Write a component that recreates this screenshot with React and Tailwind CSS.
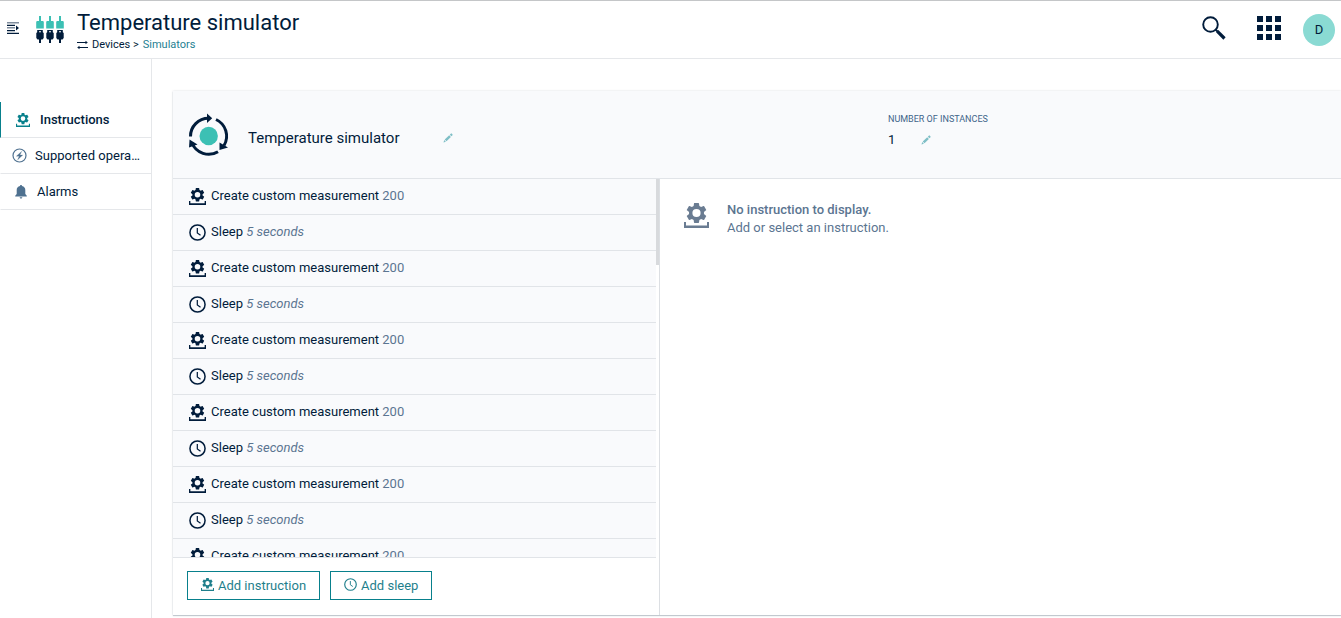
import React, { useState } from 'react';

const steps = Array.from({ length: 16 }, (_, i) =>
  i % 2 === 0
    ? { id: i, type: 'measurement', name: 'Create custom measurement', value: '200' }
    : { id: i, type: 'sleep', name: 'Sleep', value: '5 seconds' }
);

const GearTray = ({ className }) => (
  <svg viewBox="0 0 25 25" fill="currentColor" fillRule="evenodd" className={className} aria-hidden="true">
    <path
      transform="translate(.5 -2)"
      d="M19.43 12.98c.04-.32.07-.64.07-.98s-.03-.66-.07-.98l2.11-1.65c.19-.15.24-.42.12-.64l-2-3.46c-.12-.22-.39-.3-.61-.22l-2.49 1c-.52-.4-1.08-.73-1.69-.98l-.38-2.65A.488.488 0 0 0 14 2h-4c-.25 0-.46.18-.49.42l-.38 2.65c-.61.25-1.17.59-1.69.98l-2.49-1c-.23-.09-.49 0-.61.22l-2 3.46c-.13.22-.07.49.12.64l2.11 1.65c-.04.32-.07.65-.07.98s.03.66.07.98l-2.11 1.65c-.19.15-.24.42-.12.64l2 3.46c.12.22.39.3.61.22l2.49-1c.52.4 1.08.73 1.69.98l.38 2.65c.03.24.24.42.49.42h4c.25 0 .46-.18.49-.42l.38-2.65c.61-.25 1.17-.59 1.69-.98l2.49 1c.23.09.49 0 .61-.22l2-3.46c.12-.22.07-.49-.12-.64l-2.11-1.65zM12 7.9a4.1 4.1 0 1 0 0 8.2 4.1 4.1 0 0 0 0-8.2z"
    />
    <path d="M0 19h2v3.5h21V19h2v6H0z" />
  </svg>
);

const Clock = ({ className }) => (
  <svg viewBox="0 0 18 18" fill="none" stroke="currentColor" strokeWidth="1.6" className={className} aria-hidden="true">
    <circle cx="9" cy="9" r="8" />
    <path d="M8.8 4.2v5.2l3.4 2.4" strokeWidth="1.3" />
  </svg>
);

const Pencil = ({ className }) => (
  <svg viewBox="0 0 10 10" fill="currentColor" className={className} aria-hidden="true">
    <path d="M.5 9.5l.7-2.4 1.7 1.7zM1.7 6.5l4.5-4.3 1.7 1.7-4.4 4.4zM6.8 1.7L8 .6c.3-.2.5-.2.8 0l.7.8c.2.3.2.5 0 .8L8.4 3.3z" />
  </svg>
);

const MenuIcon = () => (
  <svg viewBox="0 0 13 13" fill="currentColor" className="size-[13px]" aria-hidden="true">
    <path opacity=".5" d="M0 0h12v1.5H0zM0 5h8v1.5H0z" />
    <path d="M0 2.7h8V4H0zM0 8h8v1.3H0zM0 10.7h12V12H0zM9 3.4l3 2.6-3 2.6z" />
  </svg>
);

// Three plugs, teal heads over dark sockets
const DevicesIcon = () => (
  <svg viewBox="0 0 28 28" className="size-7" aria-hidden="true">
    {[0, 10, 20].map((x) => (
      <g key={x} transform={`translate(${x} 0)`}>
        <path fill="#3cc0b4" d="M3 0h2v5h2.200l.6 1v6.500H.2V6l.6-1H3z" />
        <path fill="#011c3b" d="M1.200 14h5.600v2.300l.9.700v5l-1.200 1.500H5V27H3v-3.500H1.500L.3 22v-5l.9-.7z" />
        <path fill="#fff" d="M3 15.200h2v1H3z" />
      </g>
    ))}
  </svg>
);

const SwapIcon = () => (
  <svg viewBox="0 0 11 10" fill="currentColor" className="h-[10px] w-[11px]" aria-hidden="true">
    <path d="M0 2h8.500V.7L10.800 2.500 8.500 4.300V3H0zM11 7H2.500V5.700L.2 7.500l2.300 1.800V8H11z" />
  </svg>
);

const SimulatorIcon = () => (
  <svg viewBox="0 0 44 44" className="size-11" aria-hidden="true">
    <circle cx="20.700" cy="23" r="9.200" fill="#3cc0b4" />
    <g fill="none" stroke="#011c3b" strokeWidth="3">
      <path d="M2.500 23.500A18 18 0 0 1 20.500 5.300" />
      <path d="M28 6.500A18.300 18.300 0 0 1 36 32.500" />
      <path d="M30 38.700A18 18 0 0 1 4 30" />
    </g>
    <g fill="#011c3b">
      <path d="M19 .5v9.600l5.200-4.800z" />
      <path d="M31.500 29.500v7.500l8.500-2.500z" />
      <path d="M1 34.500L1.500 26.500l8 5z" />
    </g>
  </svg>
);

const OperationsIcon = () => (
  <svg viewBox="0 0 16 16" fill="none" stroke="currentColor" strokeWidth="1.200" className="size-4 text-[#4f7190]" aria-hidden="true">
    <circle cx="7.500" cy="7.500" r="6.500" />
    <path d="M9.800 3.200L4.300 8.200h2.900l-1.700 3.900 5.300-5H8z" fill="currentColor" strokeWidth=".2" />
  </svg>
);

const BellIcon = () => (
  <svg viewBox="0 0 12 14" fill="currentColor" className="h-[14px] w-3 text-[#4f7190]" aria-hidden="true">
    <path d="M6 0c.6 0 1 .4 1 1 2.200.5 3.300 2 3.300 4v4l1.500 1.700v.8H.2v-.8L1.700 9V5c0-2 1.100-3.500 3.300-4 0-.6.400-1 1-1zM4.700 12.200h2.600c0 .8-.6 1.300-1.300 1.300s-1.300-.5-1.300-1.300z" />
  </svg>
);

const SearchIcon = () => (
  <svg viewBox="0 0 24 24" fill="none" stroke="currentColor" className="size-6" aria-hidden="true">
    <circle cx="8.500" cy="8.500" r="7.300" strokeWidth="1.900" />
    <path d="M13.500 13.500l2 2" strokeWidth="2" />
    <path d="M15.200 15.200l7.300 7.300" strokeWidth="3.200" />
  </svg>
);

const AppsIcon = () => (
  <svg viewBox="0 0 24 24" fill="currentColor" className="size-6" aria-hidden="true">
    <path d="M0 0h6v6H0zM9 0h6v6H9zM18 0h6v6h-6zM0 9h6v6H0zM9 9h6v6H9zM18 9h6v6h-6zM0 18h6v6H0zM9 18h6v6H9zM18 18h6v6h-6z" />
  </svg>
);

function App() {
  const [active, setActive] = useState('Instructions');

  const navItem = (name) =>
    `flex h-9 w-full items-center border-b border-b-[#e5e7ea] border-l text-left ${
      active === name ? 'border-l-[#08808c] font-medium' : 'border-l-transparent'
    }`;

  return (
    <div className="flex h-screen flex-col overflow-hidden bg-white font-['Roboto',sans-serif] text-[13px] leading-[18px] text-[#011c3b]">
      {/* Top bar */}
      <header className="flex h-[59px] shrink-0 items-center border-t border-b border-t-[#c4c6c8] border-b-[#e5e7ea] pr-[6px] pl-[7px]">
        <button aria-label="Toggle navigation" className="pb-[2px]"><MenuIcon /></button>
        <div className="ml-4 flex flex-1 items-center gap-[13px]">
          <DevicesIcon />
          <div className="pt-[2px]">
            <h1 className="text-[22px] leading-7">Temperature simulator</h1>
            <div className="flex h-4 items-center gap-1 text-[11px] leading-4">
              <SwapIcon />
              <span>Devices &gt;</span>
              <a href="#simulators" className="text-[#1f7f92]">Simulators</a>
            </div>
          </div>
        </div>
        <div className="flex items-center">
          <button aria-label="Search" className="pb-1"><SearchIcon /></button>
          <button aria-label="Applications" className="ml-[31px] pb-[3px]"><AppsIcon /></button>
          <button aria-label="User menu" className="ml-[22px] size-8 rounded-full bg-[#8adad3] text-[13px]">D</button>
        </div>
      </header>

      <div className="flex min-h-0 flex-1">
        {/* Side navigation */}
        <nav className="w-[152px] shrink-0 border-r border-[#e5e7ea] pt-[43px]">
          <button onClick={() => setActive('Instructions')} className={`${navItem('Instructions')} gap-[10px] pl-[15px]`}>
            <GearTray className="size-[14px] text-[#08808c]" />
            Instructions
          </button>
          <button onClick={() => setActive('Supported operations')} className={`${navItem('Supported operations')} gap-[7px] pr-2 pl-[11px]`}>
            <OperationsIcon />
            <span className="min-w-0 flex-1 truncate">Supported operations</span>
          </button>
          <button onClick={() => setActive('Alarms')} className={`${navItem('Alarms')} gap-[10px] pl-[14px]`}>
            <BellIcon />
            Alarms
          </button>
        </nav>

        <main className="flex min-w-0 flex-1 flex-col pt-8 pb-[3px] pl-[21px]">
          <section className="flex min-h-0 flex-1 flex-col shadow-[0_0_2px_rgba(1,28,59,0.15),0_1px_1px_rgba(1,28,59,0.2)]">
            <div className="flex h-[88px] shrink-0 items-center border-b border-[#e1e4e8] bg-[#f9fafc] pl-[15px]">
              <div className="flex flex-1 items-center">
                <SimulatorIcon />
                <div className="flex items-center gap-11 pt-[6px] pl-4">
                  <h2 className="text-[15px] leading-5">Temperature simulator</h2>
                  <button aria-label="Edit name" className="text-[#7fbfc6]"><Pencil className="size-[10px]" /></button>
                </div>
              </div>
              <div className="w-[453px] pb-[10px]">
                <div className="text-[9px] leading-4 text-[#41658a]">NUMBER OF INSTANCES</div>
                <div className="mt-1 flex items-center gap-[26px]">
                  <span>1</span>
                  <button aria-label="Edit number of instances" className="text-[#7fbfc6]"><Pencil className="size-[10px]" /></button>
                </div>
              </div>
            </div>

            <div className="flex min-h-0 flex-1">
              <div className="flex w-[487px] shrink-0 flex-col border-r border-[#dcdfe3]">
                <div className="relative min-h-0 flex-1 overflow-hidden pr-[3px]">
                  <ul>
                    {steps.map((step) => (
                      <li key={step.id} className="border-b border-[#e1e4e8] bg-[#f9fafc]">
                        <button className="flex h-[35px] w-full items-center gap-[5px] pb-[2px] pl-4 text-left">
                          {step.type === 'sleep' ? <Clock className="mt-[2px] size-[17px]" /> : <GearTray className="mt-[2px] size-[17px]" />}
                          <span>
                            {step.name}{' '}
                            {step.type === 'sleep'
                              ? <em className="text-[#5b7591]">{step.value}</em>
                              : <span className="text-[#5b7591]">{step.value}</span>}
                          </span>
                        </button>
                      </li>
                    ))}
                  </ul>
                  <div className="absolute top-0 right-0 h-[86px] w-[3px] bg-[#d8dadd]" />
                </div>
                <div className="mr-[3px] flex shrink-0 gap-[10px] border-t border-[#e1e4e8] px-[14px] pt-[13px] pb-[15px] text-[#1f7f8c]">
                  <button className="flex h-[29px] items-center gap-1 border border-[#08808c] px-[13px]">
                    <GearTray className="mb-[2px] size-[13px]" /> Add instruction
                  </button>
                  <button className="flex h-[29px] items-center gap-1 border border-[#08808c] px-[13px]">
                    <Clock className="mb-[2px] size-[13px]" /> Add sleep
                  </button>
                </div>
              </div>

              <div className="flex flex-1 items-start gap-[18px] px-6 pt-[22px] text-[#6a7c92]">
                <GearTray className="mt-[2px] size-[25px]" />
                <div className="text-[#5b7591]">
                  <p className="font-medium">No instruction to display.</p>
                  <p>Add or select an instruction.</p>
                </div>
              </div>
            </div>
          </section>
        </main>
      </div>
    </div>
  );
}

export default App;
